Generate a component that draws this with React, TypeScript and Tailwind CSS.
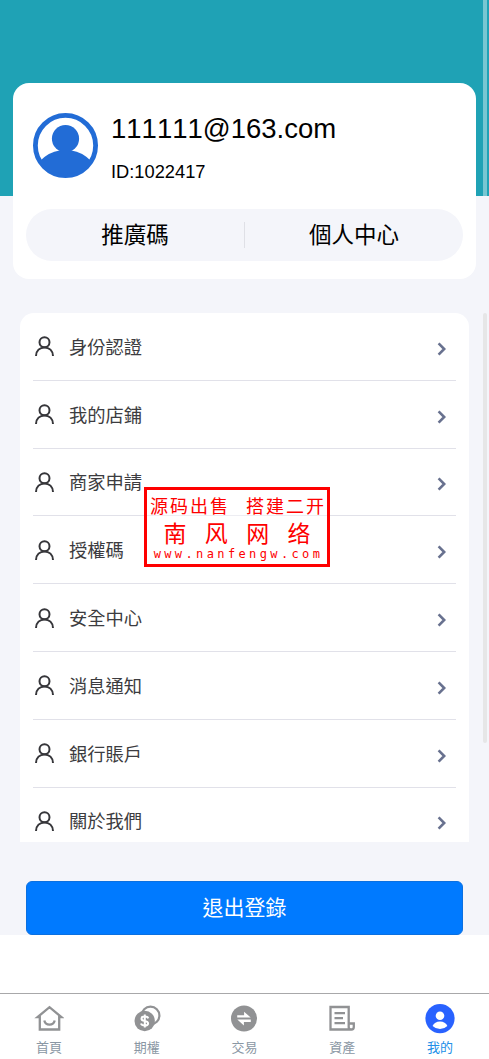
import type { ReactNode } from "react";

const menu = ["身份認證", "我的店鋪", "商家申請", "授權碼", "安全中心", "消息通知", "銀行賬戶", "關於我們"];

function Avatar() {
  return (
    <svg className="h-[66px] w-[66px] shrink-0" viewBox="0 0 66 66">
      <circle cx="33.5" cy="33.5" r="30.1" fill="#fff" stroke="#226cd6" strokeWidth="4.8" />
      <circle cx="33.5" cy="26.7" r="13.6" fill="#226cd6" />
      <path d="M8.5 48.5Q17 40 27.5 38.5h12Q50 40 58.5 48.5A30 30 0 0 1 8.5 48.5Z" fill="#226cd6" />
    </svg>
  );
}

function Person() {
  return (
    <svg className="h-5 w-5 shrink-0" viewBox="0 0 20 20" fill="none" stroke="#36363a" strokeWidth="2">
      <circle cx="9.5" cy="6.2" r="5" />
      <path d="M1 20C1 14.500 4.900 11.400 9.500 11.400s8.500 3.100 8.500 8.600" />
    </svg>
  );
}

function Chevron() {
  return (
    <svg className="h-[14px] w-[9px]" viewBox="0 0 9 14" fill="none" stroke="#68718f" strokeWidth="2.6">
      <path d="M1.600 1.400 7.200 7l-5.600 5.600" />
    </svg>
  );
}

const HomeIcon = (
  <svg className="h-[30px] w-[30px]" viewBox="0 0 30 30" fill="none" stroke="#919294" strokeWidth="2.300">
    <path d="M3.500 13.200 15.500 3.200 27.500 13.200h-2.300v12.300H5.800V13.200Z" />
    <path d="M10.300 16.500q1 4.200 5.200 4.200t5.200-4.200" />
  </svg>
);

const OptionIcon = (
  <svg className="h-[30px] w-[30px]" viewBox="0 0 30 30" fill="none">
    <circle cx="18.500" cy="11.500" r="8.900" stroke="#919294" strokeWidth="2.200" />
    <circle cx="12.700" cy="17" r="10.200" fill="#919294" />
    <path d="M16.300 14.300q-.7-1.700-3.600-1.700-3.200 0-3.200 2.100 0 1.800 3.200 2.200 3.400.4 3.400 2.500 0 2.100-3.400 2.100-3 0-3.700-2M12.800 10.600v13" stroke="#fff" strokeWidth="2" />
  </svg>
);

const TradeIcon = (
  <svg className="h-[30px] w-[30px]" viewBox="0 0 30 30">
    <circle cx="15" cy="14.500" r="13" fill="#919294" />
    <path d="M8.200 13.600V11.300h6.900V7.700l6.600 5.900ZM21.800 15.600v2.300h-6.900v3.600l-6.600-5.900Z" fill="#fff" />
  </svg>
);

const AssetIcon = (
  <svg className="h-[30px] w-[30px]" viewBox="0 0 30 30" fill="none" stroke="#919294" strokeWidth="2.300">
    <path d="M21.700 19V3H3.500v22.500h21q2.300 0 2.300-2.500v-3.500h-5.100v3.700q0 2.300 2.200 2.300" />
    <path d="M7.500 9.200h10.500M7.500 14.200h8.500M7.500 19.200h10.500" />
  </svg>
);

const MineIcon = (
  <svg className="h-[30px] w-[30px]" viewBox="0 0 30 30">
    <circle cx="15" cy="14.600" r="14.600" fill="#2962ff" />
    <circle cx="15" cy="11.800" r="4.300" fill="#fff" />
    <path d="M7.600 22q2-4.500 7.400-4.500t7.400 4.500q-3 3-7.400 3t-7.400-3Z" fill="#fff" />
  </svg>
);

const tabs: { label: string; icon: ReactNode; active?: boolean }[] = [
  { label: "首頁", icon: HomeIcon },
  { label: "期權", icon: OptionIcon },
  { label: "交易", icon: TradeIcon },
  { label: "資產", icon: AssetIcon },
  { label: "我的", icon: MineIcon, active: true },
];

function Stamp() {
  return (
    <div className="absolute left-[144px] top-[487px] flex h-[80px] w-[186px] flex-col items-center border-[3px] border-[#fe0000] bg-white/40 text-[#fe0000]">
      <div className="mt-[3px] flex h-[24px] w-[174px] justify-between whitespace-nowrap font-['Noto_Sans_CJK_SC',sans-serif] text-[18px] leading-[24px] tracking-[2px]">
        <span>源码出售</span>
        <span className="-mr-[2px]">搭建二开</span>
      </div>
      <div className="mt-[1px] flex h-[30px] w-[147px] justify-between font-['Noto_Sans_CJK_SC',sans-serif] text-[23px] leading-[28px]">
        <span>南</span>
        <span>风</span>
        <span>网</span>
        <span>络</span>
      </div>
      <div className="whitespace-nowrap pl-[3px] font-['DejaVu_Sans_Mono',monospace] text-[12px] leading-[12px] tracking-[3.38px]">www.nanfengw.com</div>
    </div>
  );
}

export default function App() {
  return (
    <div className="relative flex h-[1059px] w-[489px] flex-col overflow-hidden bg-white font-['Liberation_Sans','Noto_Sans_CJK_TC',sans-serif] text-black">
      <main className="h-[935px] bg-[#f4f5fa]">
        <header className="h-[196px] bg-[#1fa2b5] px-[13px] pt-[83px]">
          <section className="h-[196px] rounded-[16px] bg-white px-[13px] pt-[29px]">
            <div className="flex pl-[6px]">
              <Avatar />
              <div className="ml-[13px]">
                <div className="h-[36px] text-[27.5px] leading-[34px] [font-kerning:none]">111111@163.com</div>
                <div className="mt-[13px] text-[18.3px] leading-[21px] [font-kerning:none]">ID:1022417</div>
              </div>
            </div>
            <div className="mt-[27px] flex h-[52px] items-center rounded-full bg-[#f4f5fa] text-center text-[22.5px]">
              <div className="h-[26px] flex-1 border-r border-[#dfe0e6] leading-[28px]">推廣碼</div>
              <div className="h-[26px] flex-1 leading-[28px]">個人中心</div>
            </div>
          </section>
        </header>
        <ul className="mx-[20px] mt-[117px] h-[529px] overflow-hidden rounded-t-[14px] bg-white px-[13px]">
          {menu.map((item) => (
            <li key={item} className="flex h-[67.8px] items-center border-b border-[#e1e1e9] pl-[2px] pr-[10px]">
              <Person />
              <span className="ml-[14px] mt-[3px] flex-1 text-[18.3px] leading-[24px] text-[#3c3c40]">{item}</span>
              <span className="mt-[5px]">
                <Chevron />
              </span>
            </li>
          ))}
        </ul>
        <button className="mx-[26px] mt-[39px] flex h-[54px] w-[437px] items-center justify-center rounded-[6px] border border-[#0b70e0] bg-[#007aff] text-[21px] text-white">退出登錄</button>
      </main>
      <nav className="mt-[58px] flex h-[66px] border-t border-[#a8a8aa] bg-white">
        {tabs.map((tab) => (
          <div key={tab.label} className="flex flex-1 flex-col items-center pt-[10px]">
            {tab.icon}
            <span className={tab.active ? "mt-[4px] text-[13px] leading-[20px] text-[#228fe8]" : "mt-[4px] text-[13px] leading-[20px] text-[#8a97a4]"}>{tab.label}</span>
          </div>
        ))}
      </nav>
      <div className="absolute left-[483px] top-0 h-[196px] w-[4px] bg-white/40" />
      <div className="absolute left-[483px] top-[313px] h-[430px] w-[4px] rounded-full bg-[#e6e6e7]" />
      <Stamp />
    </div>
  );
}
